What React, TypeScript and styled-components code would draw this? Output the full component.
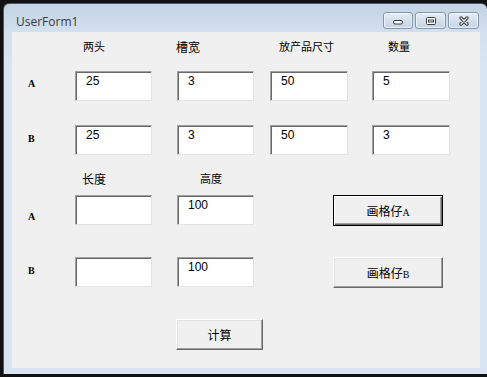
import React from "react";
import styled, { createGlobalStyle } from "styled-components";

const GlobalStyle = createGlobalStyle`
  html, body {
    margin: 0;
    padding: 0;
    background: #111;
    overflow: hidden;
  }
`;

const cjk = `"Noto Sans CJK SC", "Noto Sans", sans-serif`;

const topHeaders = [
  { text: "两头", offset: 8, size: 11 },
  { text: "槽宽", offset: -1, size: 12 },
  { text: "放产品尺寸", offset: 9, size: 11 },
  { text: "数量", offset: 16, size: 11 },
];

const topRows = [
  { label: "A", top: 8, values: ["25", "3", "50", "5"] },
  { label: "B", top: 9, values: ["25", "3", "50", "3"] },
];

const App = () => {
  return (
    <>
      <GlobalStyle />
      <Window>
        <TitleBar>
          <Title>UserForm1</Title>
          <Controls>
            <CtrlButton aria-label="minimize">
              <svg width="14" height="8" viewBox="0 0 14 8">
                <rect x="2.5" y="3.5" width="9" height="3.5" rx="1.5" fill="#fff" stroke="#3a3a3a" />
              </svg>
            </CtrlButton>
            <CtrlButton aria-label="maximize">
              <svg width="14" height="10" viewBox="0 0 14 10">
                <rect x="2.5" y="1.5" width="9" height="7" rx="1" fill="#fff" stroke="#3a3a3a" />
                <rect x="4.5" y="4" width="5" height="2" fill="none" stroke="#3a3a3a" />
              </svg>
            </CtrlButton>
            <CtrlButton aria-label="close">
              <svg width="14" height="10" viewBox="0 0 14 10">
                <path d="M4 2 L10 8 M10 2 L4 8" stroke="#3a3a3a" strokeWidth="3.2" strokeLinecap="round" />
                <path d="M4 2 L10 8 M10 2 L4 8" stroke="#fff" strokeWidth="1.2" strokeLinecap="round" />
              </svg>
            </CtrlButton>
          </Controls>
        </TitleBar>

        <Client>
          <TopGrid>
            <span />
            {topHeaders.map((h) => (
              <Header key={h.text} $offset={h.offset} $size={h.size}>
                {h.text}
              </Header>
            ))}
          </TopGrid>
          {topRows.map((r, idx) => (
            <TopRow key={r.label} $gap={idx === 0 ? 24 : 0}>
              <RowLabel $top={r.top}>{r.label}</RowLabel>
              {r.values.map((v, i) => (
                <TextBox key={i} readOnly defaultValue={v} $wide={i >= 2} />
              ))}
            </TopRow>
          ))}

          <HeaderRow2>
            <span />
            <Header $offset={7} $size={12}>长度</Header>
            <Header $offset={23} $size={11}>高度</Header>
          </HeaderRow2>
          <BottomRow>
            <RowLabel $top={17}>A</RowLabel>
            <TextBox readOnly defaultValue="" />
            <TextBox readOnly defaultValue="100" />
            <PushButton $default>
              画格仔<Latin>A</Latin>
            </PushButton>
          </BottomRow>
          <BottomRow>
            <RowLabel $top={9}>B</RowLabel>
            <TextBox readOnly defaultValue="" />
            <TextBox readOnly defaultValue="100" />
            <PushButton>
              画格仔<Latin>B</Latin>
            </PushButton>
          </BottomRow>
          <CalcRow>
            <PushButton $small>计算</PushButton>
          </CalcRow>
        </Client>
      </Window>
    </>
  );
};

export default App;

const Window = styled.div`
  margin: 3px 0 0 3px;
  width: 484px;
  height: 371px;
  box-sizing: border-box;
  border-radius: 6px 6px 0 0;
  border: 1px solid #4d5866;
  border-right: none;
  border-bottom: none;
  background: linear-gradient(180deg, #c3d3e4 0px, #d3e0ee 28px, #d9e5f2 60px, #d9e5f2 100%);
  display: flex;
  flex-direction: column;
`;
const TitleBar = styled.div`
  height: 28px;
  display: flex;
  align-items: flex-start;
  justify-content: space-between;
  padding: 0 8px 0 12px;
`;
const Title = styled.span`
  font-family: "Open Sans", "Noto Sans", sans-serif;
  font-size: 12px;
  color: #3b3b3b;
  line-height: 14px;
  margin-top: 11px;
`;
const Controls = styled.div`
  display: flex;
  gap: 2px;
  margin-top: 8px;
`;
const CtrlButton = styled.div`
  width: 31px;
  height: 17px;
  box-sizing: border-box;
  border: 1px solid #8796aa;
  border-radius: 3px;
  background: linear-gradient(180deg, #e6eef7 0%, #d3dfec 50%, #c6d5e6 100%);
  box-shadow: inset 0 0 0 1px rgba(255, 255, 255, 0.55);
  display: flex;
  align-items: center;
  justify-content: center;
  &:first-child {
    width: 30px;
  }
`;
const Client = styled.div`
  width: 468px;
  height: 336px;
  margin-left: 8px;
  background: #f0f0f0;
  display: flex;
  flex-direction: column;
`;
const TopGrid = styled.div`
  display: grid;
  grid-template-columns: 63px 102px 93px 102px 1fr;
  height: 39px;
  padding-top: 8px;
  box-sizing: border-box;
  align-items: start;
`;
const Header = styled.span<{ $offset: number; $size: number }>`
  font-family: ${cjk};
  font-size: ${({ $size }) => $size}px;
  line-height: 13px;
  color: #000;
  margin-left: ${({ $offset }) => $offset}px;
  white-space: nowrap;
`;
const TopRow = styled.div<{ $gap: number }>`
  display: grid;
  grid-template-columns: 63px 102px 93px 102px 1fr;
  height: 30px;
  margin-bottom: ${({ $gap }) => $gap}px;
  align-items: start;
`;
const RowLabel = styled.span<{ $top: number }>`
  font-family: "Liberation Serif", serif;
  font-size: 10px;
  font-weight: 600;
  line-height: 10px;
  color: #000;
  padding: ${({ $top }) => $top}px 0 0 16px;
`;
const TextBox = styled.input<{ $wide?: boolean }>`
  width: ${({ $wide }) => ($wide ? 78 : 77)}px;
  height: 30px;
  box-sizing: border-box;
  margin: 0;
  padding: 2px 4px 12px 10px;
  font-family: "Liberation Sans", Arial, sans-serif;
  font-size: 12px;
  line-height: 14px;
  color: #000;
  background: #fff;
  border-style: solid;
  border-width: 1px;
  border-color: #a0a0a0 #e3e3e3 #e3e3e3 #a0a0a0;
  box-shadow: inset 1px 1px 0 #696969;
  outline: none;
`;
const HeaderRow2 = styled.div`
  display: grid;
  grid-template-columns: 63px 102px 1fr;
  height: 40px;
  padding-top: 17px;
  box-sizing: border-box;
  align-items: start;
`;
const BottomRow = styled.div`
  display: grid;
  grid-template-columns: 63px 102px 156px 1fr;
  height: 31px;
  margin-bottom: 31px;
  align-items: start;
`;
const PushButton = styled.button<{ $default?: boolean; $small?: boolean }>`
  width: ${({ $small }) => ($small ? 87 : 110)}px;
  height: 31px;
  box-sizing: border-box;
  margin: 0;
  padding: 0;
  font-family: ${cjk};
  font-size: 12px;
  color: #000;
  background: #f0f0f0;
  border-style: solid;
  border-width: 1px;
  border-color: ${({ $default }) =>
    $default ? "#000" : "#fff #696969 #696969 #fff"};
  box-shadow: ${({ $default }) =>
    $default
      ? "inset 1px 1px 0 #fff, inset -1px -1px 0 #696969, inset -2px -2px 0 #a0a0a0"
      : "inset -1px -1px 0 #a0a0a0, inset 1px 1px 0 #e3e3e3"};
`;
const Latin = styled.span`
  font-family: "Liberation Serif", serif;
  font-size: 10px;
`;
const CalcRow = styled.div`
  display: flex;
  padding-left: 164px;
`;
